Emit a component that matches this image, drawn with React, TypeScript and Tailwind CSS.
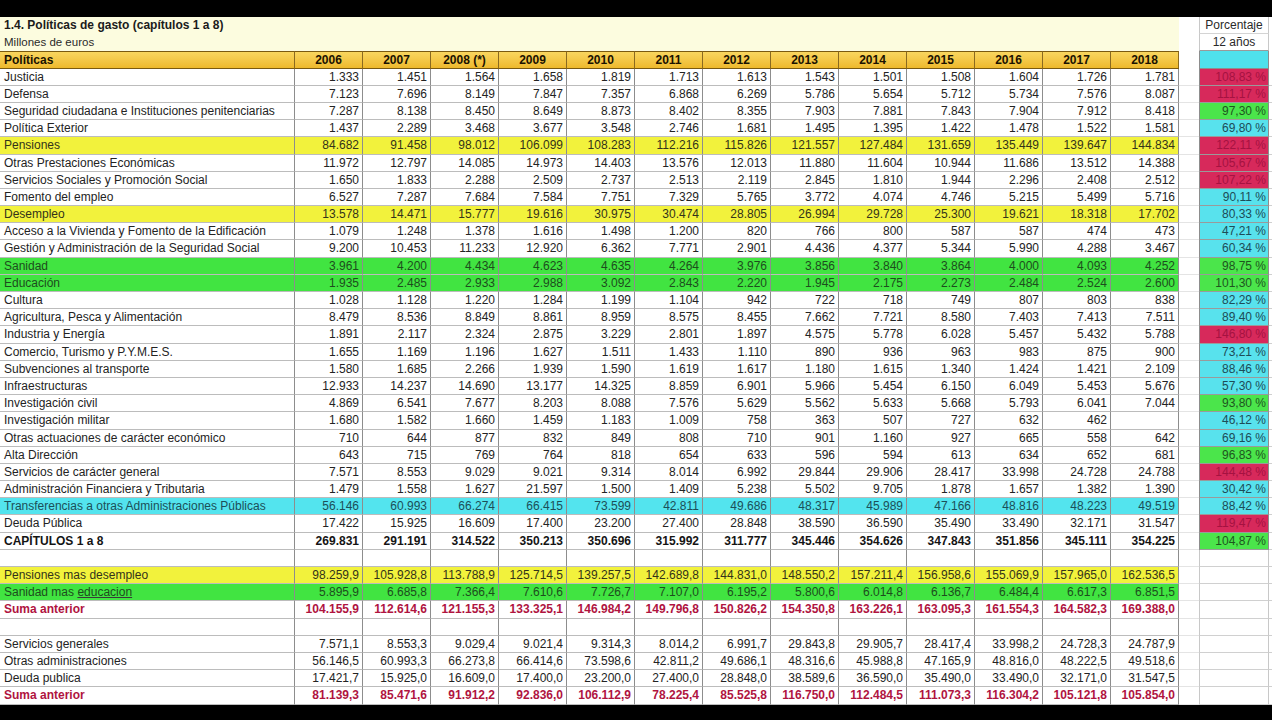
import React from "react";

type Kind = "w" | "y" | "g" | "c" | "b" | "s" | "blank";
type PctKind = "r" | "g" | "c";
interface R {
  label: string;
  vals: string[];
  pct?: [string, PctKind];
  k: Kind;
  u?: boolean;
}

const sp = (s: string) => s.split(" ");

const rows: R[] = [
  { label: "Justicia", vals: sp("1.333 1.451 1.564 1.658 1.819 1.713 1.613 1.543 1.501 1.508 1.604 1.726 1.781"), pct: ["108,83 %", "r"], k: "w" },
  { label: "Defensa", vals: sp("7.123 7.696 8.149 7.847 7.357 6.868 6.269 5.786 5.654 5.712 5.734 7.576 8.087"), pct: ["111,17 %", "r"], k: "w" },
  { label: "Seguridad ciudadana e Instituciones penitenciarias", vals: sp("7.287 8.138 8.450 8.649 8.873 8.402 8.355 7.903 7.881 7.843 7.904 7.912 8.418"), pct: ["97,30 %", "g"], k: "w" },
  { label: "Política Exterior", vals: sp("1.437 2.289 3.468 3.677 3.548 2.746 1.681 1.495 1.395 1.422 1.478 1.522 1.581"), pct: ["69,80 %", "c"], k: "w" },
  { label: "Pensiones", vals: sp("84.682 91.458 98.012 106.099 108.283 112.216 115.826 121.557 127.484 131.659 135.449 139.647 144.834"), pct: ["122,11 %", "r"], k: "y" },
  { label: "Otras Prestaciones Económicas", vals: sp("11.972 12.797 14.085 14.973 14.403 13.576 12.013 11.880 11.604 10.944 11.686 13.512 14.388"), pct: ["105,67 %", "r"], k: "w" },
  { label: "Servicios Sociales y Promoción Social", vals: sp("1.650 1.833 2.288 2.509 2.737 2.513 2.119 2.845 1.810 1.944 2.296 2.408 2.512"), pct: ["107,22 %", "r"], k: "w" },
  { label: "Fomento del empleo", vals: sp("6.527 7.287 7.684 7.584 7.751 7.329 5.765 3.772 4.074 4.746 5.215 5.499 5.716"), pct: ["90,11 %", "c"], k: "w" },
  { label: "Desempleo", vals: sp("13.578 14.471 15.777 19.616 30.975 30.474 28.805 26.994 29.728 25.300 19.621 18.318 17.702"), pct: ["80,33 %", "c"], k: "y" },
  { label: "Acceso a la Vivienda y Fomento de la Edificación", vals: sp("1.079 1.248 1.378 1.616 1.498 1.200 820 766 800 587 587 474 473"), pct: ["47,21 %", "c"], k: "w" },
  { label: "Gestión y Administración de la Seguridad Social", vals: sp("9.200 10.453 11.233 12.920 6.362 7.771 2.901 4.436 4.377 5.344 5.990 4.288 3.467"), pct: ["60,34 %", "c"], k: "w" },
  { label: "Sanidad", vals: sp("3.961 4.200 4.434 4.623 4.635 4.264 3.976 3.856 3.840 3.864 4.000 4.093 4.252"), pct: ["98,75 %", "g"], k: "g" },
  { label: "Educación", vals: sp("1.935 2.485 2.933 2.988 3.092 2.843 2.220 1.945 2.175 2.273 2.484 2.524 2.600"), pct: ["101,30 %", "g"], k: "g" },
  { label: "Cultura", vals: sp("1.028 1.128 1.220 1.284 1.199 1.104 942 722 718 749 807 803 838"), pct: ["82,29 %", "c"], k: "w" },
  { label: "Agricultura, Pesca y Alimentación", vals: sp("8.479 8.536 8.849 8.861 8.959 8.575 8.455 7.662 7.721 8.580 7.403 7.413 7.511"), pct: ["89,40 %", "c"], k: "w" },
  { label: "Industria y Energía", vals: sp("1.891 2.117 2.324 2.875 3.229 2.801 1.897 4.575 5.778 6.028 5.457 5.432 5.788"), pct: ["146,80 %", "r"], k: "w" },
  { label: "Comercio, Turismo y P.Y.M.E.S.", vals: sp("1.655 1.169 1.196 1.627 1.511 1.433 1.110 890 936 963 983 875 900"), pct: ["73,21 %", "c"], k: "w" },
  { label: "Subvenciones al transporte", vals: sp("1.580 1.685 2.266 1.939 1.590 1.619 1.617 1.180 1.615 1.340 1.424 1.421 2.109"), pct: ["88,46 %", "c"], k: "w" },
  { label: "Infraestructuras", vals: sp("12.933 14.237 14.690 13.177 14.325 8.859 6.901 5.966 5.454 6.150 6.049 5.453 5.676"), pct: ["57,30 %", "c"], k: "w" },
  { label: "Investigación civil", vals: sp("4.869 6.541 7.677 8.203 8.088 7.576 5.629 5.562 5.633 5.668 5.793 6.041 7.044"), pct: ["93,80 %", "g"], k: "w" },
  { label: "Investigación militar", vals: [...sp("1.680 1.582 1.660 1.459 1.183 1.009 758 363 507 727 632 462"), ""], pct: ["46,12 %", "c"], k: "w" },
  { label: "Otras actuaciones de carácter económico", vals: sp("710 644 877 832 849 808 710 901 1.160 927 665 558 642"), pct: ["69,16 %", "c"], k: "w" },
  { label: "Alta Dirección", vals: sp("643 715 769 764 818 654 633 596 594 613 634 652 681"), pct: ["96,83 %", "g"], k: "w" },
  { label: "Servicios de carácter general", vals: sp("7.571 8.553 9.029 9.021 9.314 8.014 6.992 29.844 29.906 28.417 33.998 24.728 24.788"), pct: ["144,48 %", "r"], k: "w" },
  { label: "Administración Financiera y Tributaria", vals: sp("1.479 1.558 1.627 21.597 1.500 1.409 5.238 5.502 9.705 1.878 1.657 1.382 1.390"), pct: ["30,42 %", "c"], k: "w" },
  { label: "Transferencias a otras Administraciones Públicas", vals: sp("56.146 60.993 66.274 66.415 73.599 42.811 49.686 48.317 45.989 47.166 48.816 48.223 49.519"), pct: ["88,42 %", "c"], k: "c" },
  { label: "Deuda Pública", vals: sp("17.422 15.925 16.609 17.400 23.200 27.400 28.848 38.590 36.590 35.490 33.490 32.171 31.547"), pct: ["119,47 %", "r"], k: "w" },
  { label: "CAPÍTULOS 1 a 8", vals: sp("269.831 291.191 314.522 350.213 350.696 315.992 311.777 345.446 354.626 347.843 351.856 345.111 354.225"), pct: ["104,87 %", "g"], k: "b" },
  { label: "", vals: Array(13).fill(""), k: "blank" },
  { label: "Pensiones mas desempleo", vals: sp("98.259,9 105.928,8 113.788,9 125.714,5 139.257,5 142.689,8 144.831,0 148.550,2 157.211,4 156.958,6 155.069,9 157.965,0 162.536,5"), k: "y" },
  { label: "Sanidad mas ", u: true, vals: sp("5.895,9 6.685,8 7.366,4 7.610,6 7.726,7 7.107,0 6.195,2 5.800,6 6.014,8 6.136,7 6.484,4 6.617,3 6.851,5"), k: "g" },
  { label: "Suma anterior", vals: sp("104.155,9 112.614,6 121.155,3 133.325,1 146.984,2 149.796,8 150.826,2 154.350,8 163.226,1 163.095,3 161.554,3 164.582,3 169.388,0"), k: "s" },
  { label: "", vals: Array(13).fill(""), k: "blank" },
  { label: "Servicios generales", vals: sp("7.571,1 8.553,3 9.029,4 9.021,4 9.314,3 8.014,2 6.991,7 29.843,8 29.905,7 28.417,4 33.998,2 24.728,3 24.787,9"), k: "w" },
  { label: "Otras administraciones", vals: sp("56.146,5 60.993,3 66.273,8 66.414,6 73.598,6 42.811,2 49.686,1 48.316,6 45.988,8 47.165,9 48.816,0 48.222,5 49.518,6"), k: "w" },
  { label: "Deuda publica", vals: sp("17.421,7 15.925,0 16.609,0 17.400,0 23.200,0 27.400,0 28.848,0 38.589,6 36.590,0 35.490,0 33.490,0 32.171,0 31.547,5"), k: "w" },
  { label: "Suma anterior", vals: sp("81.139,3 85.471,6 91.912,2 92.836,0 106.112,9 78.225,4 85.525,8 116.750,0 112.484,5 111.073,3 116.304,2 105.121,8 105.854,0"), k: "s" },
];

const years = ["2006", "2007", "2008 (*)", "2009", "2010", "2011", "2012", "2013", "2014", "2015", "2016", "2017", "2018"];

const rowCls: Record<Kind, string> = {
  w: "bg-white text-[#232323]",
  y: "bg-[#f2f23c] text-[#33331a]",
  g: "bg-[#41e441] text-[#1d4d1d]",
  c: "bg-[#53e4ee] text-[#1c4f58]",
  b: "bg-white text-[#141414] font-bold",
  s: "bg-white text-[#b0143f] font-bold",
  blank: "bg-white",
};

const pctCls: Record<PctKind, string> = {
  r: "bg-[#d7295b] text-[#a51241]",
  g: "bg-[#4be54b] text-[#1e561e]",
  c: "bg-[#58e2ed] text-[#1d4c57]",
};

const GRID = "grid grid-cols-[295px_repeat(13,68px)_20px_70px_3px] h-[17.2px] leading-[16px] text-[12px]";
const CELL = "border-r border-b border-r-[#8d8d8d] border-b-[#bcbcbc] overflow-hidden whitespace-nowrap";

function DataRow({ r }: { r: R }) {
  const c = rowCls[r.k];
  return (
    <div className={GRID}>
      <div className={`${c} ${CELL} pl-[4px]`}>
        {r.label}
        {r.u && <span className="underline decoration-[#3a3a3a] underline-offset-[1px]">educacion</span>}
      </div>
      {r.vals.map((v, i) => (
        <div key={i} className={`${c} ${CELL} text-right pr-[3px]`}>
          {v}
        </div>
      ))}
      <div className="bg-white border-b border-b-[#e4e4e4]" />
      {r.pct ? (
        <div className={`${pctCls[r.pct[1]]} border-x border-b border-x-[#8d8d8d] border-b-[#9a9a9a] text-right pr-[2px] overflow-hidden whitespace-nowrap`}>
          {r.pct[0]}
        </div>
      ) : (
        <div className="bg-white border-x border-b border-x-[#c8c8c8] border-b-[#d0d0d0]" />
      )}
      <div className="bg-white border-b border-b-[#d0d0d0]" />
    </div>
  );
}

export default function App() {
  return (
    <div className="w-[1272px] h-[720px] bg-black overflow-hidden pt-[17px] font-['Liberation_Sans',Arial,sans-serif]">
      <div className={GRID}>
        <div className="col-span-14 bg-[#fcfcdf] pl-[4px] font-bold text-[#1b1b1b] text-[12px]">
          1.4. Políticas de gasto (capítulos 1 a 8)
        </div>
        <div className="bg-white" />
        <div className="bg-white border-x border-b border-x-[#c8c8c8] border-b-[#d4d4d4] text-center text-[#2a2a2a]">
          Porcentaje
        </div>
        <div className="bg-white" />
      </div>
      <div className={GRID}>
        <div className="col-span-14 bg-[#fcfcdf] pl-[4px] text-[#2a2a2a] text-[11.5px]">Millones de euros</div>
        <div className="bg-white" />
        <div className="bg-white border-x border-b border-x-[#c8c8c8] border-b-[#9a9a9a] text-center text-[#2a2a2a]">
          12 años
        </div>
        <div className="bg-white" />
      </div>
      <div className={GRID}>
        <div className="bg-linear-to-b from-[#f9d65e] to-[#eeb92b] border-y border-r border-y-[#7a5a10] border-r-[#8a6a20] pl-[4px] font-bold text-[#1a1200]">
          Políticas
        </div>
        {years.map((y) => (
          <div
            key={y}
            className="bg-linear-to-b from-[#f9d65e] to-[#eeb92b] border-y border-r border-y-[#7a5a10] border-r-[#8a6a20] text-center font-bold text-[#1a1200]"
          >
            {y}
          </div>
        ))}
        <div className="bg-white" />
        <div className="bg-[#4fe1ec] border-x border-b border-x-[#8d8d8d] border-b-[#8d8d8d]" />
        <div className="bg-white" />
      </div>
      {rows.map((r, i) => (
        <DataRow key={i} r={r} />
      ))}
    </div>
  );
}
